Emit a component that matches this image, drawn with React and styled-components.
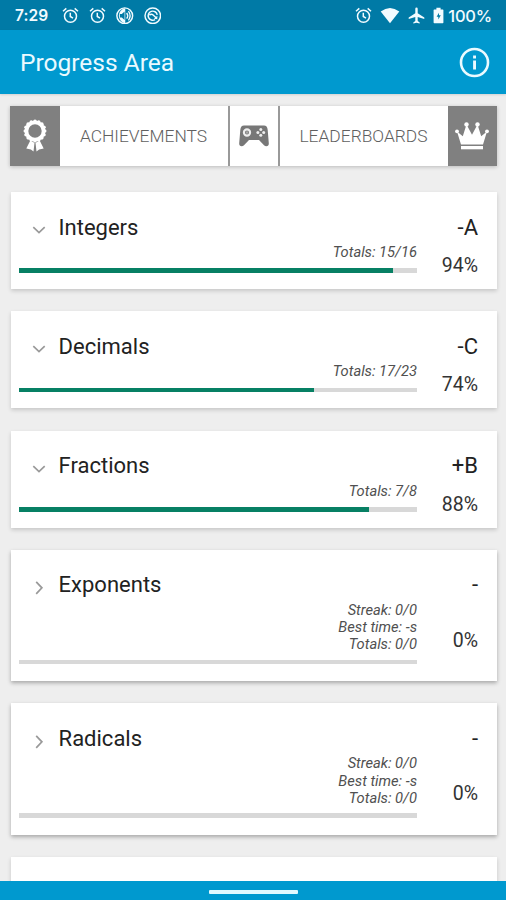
import React from "react";
import styled, { createGlobalStyle } from "styled-components";

const Global = createGlobalStyle`
  *, *::before, *::after { box-sizing: border-box; }
  body { margin: 0; background: #eee; font-family: Roboto, "Liberation Sans", sans-serif; }
  svg { display: block; flex: none; }
`;

const Screen = styled.div`
  width: 506px;
  height: 900px;
  display: flex;
  flex-direction: column;
  overflow: hidden;
  background: #eee;
`;

const StatusBar = styled.header`
  height: 30px;
  flex: none;
  padding: 1px 14px 0 15px;
  display: flex;
  align-items: center;
  justify-content: space-between;
  background: #007aa6;
  color: #f2fbff;
  font: 600 15.5px/28px Inter, sans-serif;
`;

const StatusGroup = styled.div`
  display: flex;
  align-items: center;
  gap: ${(p) => p.$gap}px;
`;

const Clock = styled.span`
  width: 37px;
  letter-spacing: 0.1px;
`;

const Battery = styled.span`
  display: flex;
  align-items: center;
  gap: 4px;
  font-weight: 500;
  font-size: 16.5px;
  letter-spacing: -0.2px;
`;

const AppBar = styled.div`
  height: 64px;
  flex: none;
  padding: 0 16px 0 20px;
  display: flex;
  align-items: center;
  justify-content: space-between;
  background: #0099cf;
  color: #eafaff;
  box-shadow: 0 1px 2px rgba(0, 0, 0, 0.12);
`;

const Title = styled.h1`
  margin: 0;
  padding-top: 2px;
  font-size: 24.5px;
  line-height: 30px;
  font-weight: 400;
`;

const Content = styled.main`
  flex: 1;
  min-height: 0;
  overflow: hidden;
  padding: 12px 9px 0 10px;
`;

const Actions = styled.nav`
  height: 59.5px;
  display: grid;
  grid-template-columns: 49.5px 168px 52px 168px 49.5px;
  background: #fff;
  box-shadow: 0 1px 4px rgba(0, 0, 0, 0.22);
`;

const IconCell = styled.div`
  display: flex;
  align-items: center;
  justify-content: center;
  background: ${(p) => (p.$filled ? "#808080" : "#fff")};
  color: ${(p) => (p.$filled ? "#fff" : "#777")};
  border: solid #999;
  border-width: ${(p) => (p.$filled ? "0" : "0 2px")};
`;

const ActionLabel = styled.button`
  border: 0;
  padding: 1px 0 0;
  background: none;
  color: #606060;
  font: 300 17.4px/24px Roboto, sans-serif;
  text-align: center;
`;

const CardList = styled.div`
  display: flex;
  flex-direction: column;
  gap: 22.3px;
  padding: 26.5px 0 0 1px;
`;

const Card = styled.section`
  flex: none;
  width: 485.5px;
  height: ${(p) => (p.$detailed ? 131.2 : 97)}px;
  display: grid;
  grid-template-columns: 398px 1fr;
  grid-template-rows: 52px 1fr;
  padding: 0 18.5px 0 8px;
  background: #fff;
  box-shadow: 0 1.5px ${(p) => (p.$detailed ? "4px rgba(0,0,0,0.3)" : "4px rgba(0,0,0,0.17)")};
`;

const Heading = styled.div`
  display: flex;
  align-items: flex-start;
  padding: 20.5px 0 0 10px;
  color: #999;
  svg { margin: 7.7px 9.6px 0 0; }
`;

const Name = styled.h2`
  margin: 0;
  color: #222;
  font-size: 22px;
  line-height: 30px;
  font-weight: 400;
`;

const Grade = styled.div`
  padding-top: 20.5px;
  text-align: right;
  color: #222;
  font-size: 22px;
  line-height: 30px;
`;

const Stats = styled.div`
  text-align: right;
  color: #505050;
  font-size: 14.7px;
  line-height: 17.3px;
  font-style: italic;
  white-space: nowrap;
`;

const Track = styled.div`
  height: 4.6px;
  margin-top: ${(p) => (p.$detailed ? 6 : 7.2)}px;
  background: #d8d8d8;
`;

const Fill = styled.div`
  height: 100%;
  background: #078064;
`;

const Percent = styled.div`
  padding-top: ${(p) => (p.$detailed ? 27 : 10)}px;
  text-align: right;
  color: #333;
  font-size: 19.5px;
  line-height: 24px;
`;

const NavBar = styled.footer`
  height: 19px;
  flex: none;
  display: flex;
  align-items: center;
  justify-content: center;
  padding-top: 3px;
  background: #0099cf;
`;

const HomeHandle = styled.div`
  width: 89px;
  height: 3.6px;
  border-radius: 1px;
  background: #e2f9ff;
`;

const AlarmIcon = () => (
  <svg width="17" height="17" viewBox="0 0 17 17" fill="none" stroke="currentColor" strokeWidth="1.5">
    <circle cx="8.5" cy="9.2" r="6" />
    <path d="M1 4.2 4.3 1.4M16 4.2l-3.3-2.8M8.3 5.8v3.7l2.7 1.6" />
  </svg>
);

const VolumeIcon = () => (
  <svg width="17.5" height="17.5" viewBox="0 0 18 18">
    <circle cx="9" cy="9" r="8.1" fill="none" stroke="currentColor" strokeWidth="1.5" />
    <path d="M9.5 1.3A7.8 7.8 0 0 0 9.5 16.7Z" fill="currentColor" />
    <path d="M4 7.2h2l2.8-2.6v8.8L6 10.8H4Z" fill="#007aa6" />
    <path d="M11 6q2.2 3 0 6M12.8 4.3q3.4 4.7 0 9.4" fill="none" stroke="currentColor" strokeWidth="1.4" />
  </svg>
);

const SyncIcon = () => (
  <svg width="17.5" height="17.5" viewBox="0 0 18 18" fill="none" stroke="currentColor" strokeWidth="1.5">
    <circle cx="9" cy="9" r="8" />
    <path d="M11.4 13A4.7 4.7 0 1 1 13.6 8M5.6 8.3q2-1.6 3.8 0l3.3 3" />
    <path d="m10.2 12 3.5.6V9Z" fill="currentColor" stroke="none" />
  </svg>
);

const WifiIcon = () => (
  <svg width="20" height="17" viewBox="0 0 20 17" fill="currentColor">
    <path d="M.7 4.5Q10-2.7 19.3 4.5L10 16.2Z" />
  </svg>
);

const PlaneIcon = () => (
  <svg width="17" height="17" viewBox="0 0 17 17" fill="currentColor">
    <path d="M7.3 1.8a1.2 1.2 0 0 1 2.4 0v4.5l6.6 4.1v1.7L9.7 10v4.1l2 1.4v1.1l-3.2-.9-3.2.9v-1.1l2-1.4V10L.7 12.1v-1.7l6.6-4.1Z" />
  </svg>
);

const BatteryIcon = () => (
  <svg width="11" height="17" viewBox="0 0 11 17">
    <path d="M3.4.7h4.2v1.7h2.1q.7 0 .7.7v12.5q0 .7-.7.7H1.3q-.7 0-.7-.7V3.1q0-.7.7-.7h2.1Z" fill="currentColor" />
    <path d="M6 5.8 3.6 9.8h1.7v2.8l2.5-4.3H6Z" fill="#007aa6" />
  </svg>
);

const InfoIcon = () => (
  <svg width="31" height="31" viewBox="0 0 31 31">
    <circle cx="15.5" cy="15.5" r="13.5" fill="none" stroke="currentColor" strokeWidth="2.6" />
    <path d="M14.1 8.4h2.9v3h-2.9zM14.1 13.6h2.9v8.8h-2.9z" fill="currentColor" />
  </svg>
);

const scallops = Array.from({ length: 16 }, (_, i) => {
  const a = (i * Math.PI) / 8;
  return { cx: 12 + 9.7 * Math.cos(a), cy: 12 + 9.7 * Math.sin(a) };
});

const RosetteIcon = () => (
  <svg width="24" height="34" viewBox="0 0 24 34">
    <path d="m7.2 21.8 4.3 2-1 8.6-2.6-1.8-4.6-1.2ZM16.8 21.8l-4.3 2 1 8.6 2.6-1.8 4.6-1.2Z" fill="currentColor" />
    <circle cx="12" cy="12" r="8.6" fill="#808080" stroke="currentColor" strokeWidth="3.8" />
    {scallops.map((s, i) => <circle key={i} cx={s.cx} cy={s.cy} r="1.8" fill="currentColor" />)}
  </svg>
);

const GamepadIcon = () => (
  <svg width="30" height="22" viewBox="0 0 30 22">
    <path d="M5 .6H25Q28.3.6 28.7 5L29.8 18.2Q30 21.3 27.3 21.3 26 21.3 25 20.2L20 14.9H10L5 20.2Q4 21.3 2.7 21.3 0 21.3.2 18.2L1.3 5Q1.7.6 5 .6Z" fill="currentColor" />
    <circle cx="8" cy="7.5" r="3.1" fill="none" stroke="#eee" strokeWidth="2.1" />
    <circle cx="8" cy="7.5" r="1.2" fill="#aaa" />
    <g fill="#eee">
      <circle cx="21.8" cy="4.5" r="1.5" /><circle cx="21.8" cy="10.3" r="1.5" />
      <circle cx="18.9" cy="7.4" r="1.5" /><circle cx="24.7" cy="7.4" r="1.5" />
    </g>
  </svg>
);

const CrownIcon = () => (
  <svg width="34" height="28" viewBox="0 0 34 28" fill="currentColor">
    <path d="m2 9.5 5.8 4.8L11.5 2.5l5.5 10.3 5.5-10.3 3.7 11.8L32 9.5l-4 13H6Z" />
    <path d="M6 24h22v3.3H6z" />
    <circle cx="2" cy="9.3" r="1.9" /><circle cx="11.5" cy="2.4" r="2.2" />
    <circle cx="22.5" cy="2.4" r="2.2" /><circle cx="32" cy="9.3" r="1.9" />
  </svg>
);

const Chevron = ({ open }) => (
  <svg width="20" height="20" viewBox="0 0 20 20" fill="none" stroke="currentColor" strokeWidth="1.7">
    <path d={open ? "m4.3 7.2 5.7 5.3 5.7-5.3" : "m7.2 3.8 5.7 6-5.7 6"} />
  </svg>
);

const topics = [
  { name: "Integers", grade: "-A", stats: ["Totals: 15/16"], percent: 94 },
  { name: "Decimals", grade: "-C", stats: ["Totals: 17/23"], percent: 74 },
  { name: "Fractions", grade: "+B", stats: ["Totals: 7/8"], percent: 88 },
  { name: "Exponents", grade: "-", stats: ["Streak: 0/0", "Best time: -s", "Totals: 0/0"], percent: 0 },
  { name: "Radicals", grade: "-", stats: ["Streak: 0/0", "Best time: -s", "Totals: 0/0"], percent: 0 },
];

const TopicCard = ({ name, grade, stats, percent }) => {
  const detailed = stats.length > 1;
  return (
    <Card $detailed={detailed}>
      <Heading><Chevron open={!detailed} /><Name>{name}</Name></Heading>
      <Grade>{grade}</Grade>
      <div>
        <Stats>{stats.map((s) => <div key={s}>{s}</div>)}</Stats>
        <Track $detailed={detailed}><Fill style={{ width: `${percent}%` }} /></Track>
      </div>
      <Percent $detailed={detailed}>{percent}%</Percent>
    </Card>
  );
};

export default function App() {
  return (
    <Screen>
      <Global />
      <StatusBar>
        <StatusGroup $gap={10}>
          <Clock>7:29</Clock>
          <AlarmIcon /><AlarmIcon /><VolumeIcon /><SyncIcon />
        </StatusGroup>
        <StatusGroup $gap={8}>
          <AlarmIcon /><WifiIcon /><PlaneIcon />
          <Battery><BatteryIcon />100%</Battery>
        </StatusGroup>
      </StatusBar>
      <AppBar><Title>Progress Area</Title><InfoIcon /></AppBar>
      <Content>
        <Actions>
          <IconCell $filled><RosetteIcon /></IconCell>
          <ActionLabel>ACHIEVEMENTS</ActionLabel>
          <IconCell><GamepadIcon /></IconCell>
          <ActionLabel>LEADERBOARDS</ActionLabel>
          <IconCell $filled><CrownIcon /></IconCell>
        </Actions>
        <CardList>
          {topics.map((t) => <TopicCard key={t.name} {...t} />)}
          <Card />
        </CardList>
      </Content>
      <NavBar><HomeHandle /></NavBar>
    </Screen>
  );
}
